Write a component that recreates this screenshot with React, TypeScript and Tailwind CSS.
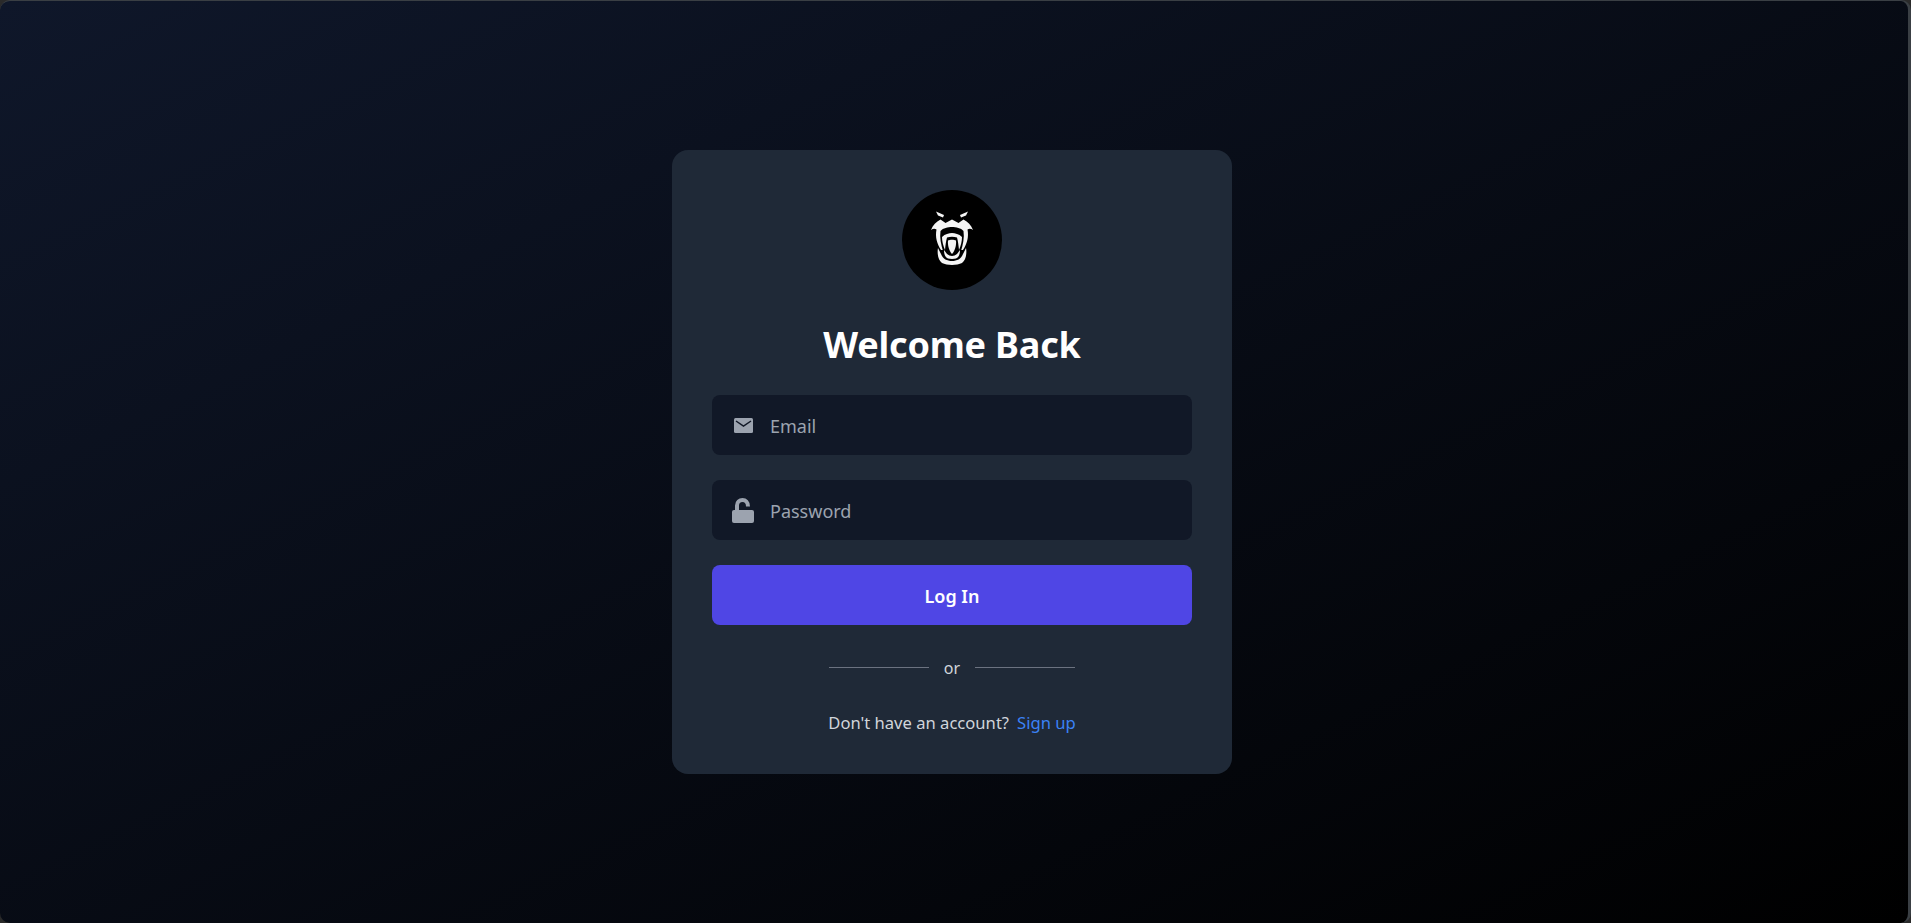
function GorillaLogo() {
  return (
    <svg viewBox="0 0 55 70" className="w-[55px] h-[70px] mb-[2px]">
      <path fill="#f5f5f5" d="M11 7.5 L19 11 L18 13.5 L13 11.5 Z" />
      <path fill="#f5f5f5" d="M43 7.5 L35 11 L36 13.5 L41 11.5 Z" />
      {/* head */}
      <path
        fill="#f5f5f5"
        d="M6 26 C8 21 11 18 15.5 15.5 L20.5 19 L27 15.5 L33.5 19 L38.5 15.5 C43 18 46 21 48 26 C46 24.5 44 24.5 42.5 25.5 C44 33 42 40 38 46 L16 46 C12 40 10 33 11.5 25.5 C10 24.5 8 24.5 6 26 Z"
      />
      <path fill="#000" d="M15.5 27 C18 24 23 23 27 23 C31 23 36 24 38.5 27 C39.5 34 38 40 36 47 L18 47 C16 40 14.5 34 15.5 27 Z" />
      {/* upper lip and teeth */}
      <path
        fill="#f5f5f5"
        d="M17 33 C20 30 24 29 27 29 C30 29 34 30 37 33 C37 37 36 41 34 46 C33.5 41 33 37 32 33.5 C29 32.5 25 32.5 22 33.5 C21 37 20.5 41 20 46 C18 41 17 37 17 33 Z"
      />
      {/* tongue */}
      <path fill="#f5f5f5" d="M23 36.5 C25 35.5 29 35.5 31 36.5 C31.5 41 30 47 27 50 C24 47 22.5 41 23 36.5 Z" />
      {/* inner jaw */}
      <path fill="#f5f5f5" d="M19 46 L22 50 C25 52.5 29 52.5 32 50 L35 46 C35 50 34 53 31 54.5 C29 55 25 55 23 54.5 C20 53 19 50 19 46 Z" />
      {/* outer jaw */}
      <path fill="#f5f5f5" d="M13 44 L16 50 C18 55 22 57 27 57 C32 57 36 55 38 50 L41 44 C42 49 41 56 37 59 C32 61.5 22 61.5 17 59 C13 56 12 49 13 44 Z" />
    </svg>
  );
}

function MailIcon() {
  return (
    <svg viewBox="0 0 19 15" className="w-[19px] h-[15px]">
      <rect width="19" height="15" rx="1.5" fill="#9ca3af" />
      <path d="M2 3 L9.5 8 L17 3" fill="none" stroke="#111827" strokeWidth="1.5" />
    </svg>
  );
}

function UnlockIcon() {
  return (
    <svg viewBox="0 0 22 25" className="w-[22px] h-[25px]">
      <path d="M5 13 V7.5 C5 4 7.5 2 10.5 2 C13.5 2 16 4 16 8.5" fill="none" stroke="#9ca3af" strokeWidth="4" />
      <rect y="12" width="22" height="13" rx="2" fill="#9ca3af" />
    </svg>
  );
}

export default function App() {
  return (
    <div className="h-[923px] bg-[#2a2a2a] font-['Noto_Sans',sans-serif]">
      <div className="h-full rounded-[10px] border-t border-r-[3px] border-[#3a3f44] bg-linear-to-br/srgb from-[#0f172a] to-black flex justify-center pt-[149px] pr-[4px]">
        <div className="w-[560px] h-[624px] bg-[#1f2937] rounded-2xl pt-10 px-10 flex flex-col items-center">
          <div className="w-[100px] h-[100px] shrink-0 rounded-full bg-black flex items-center justify-center">
            <GorillaLogo />
          </div>
          <h1 className="mt-[31px] text-[36px] leading-[48px] font-bold text-white tracking-[-0.2px]">Welcome Back</h1>
          <div className="mt-[26px] w-full flex flex-col gap-[25px]">
            <div className="h-[60px] bg-[#111827] rounded-lg flex items-center pl-[22px]">
              <MailIcon />
              <span className="ml-[17px] pt-[2px] text-[18px] text-[#9ca3af]">Email</span>
            </div>
            <div className="h-[60px] bg-[#111827] rounded-lg flex items-center pl-5">
              <UnlockIcon />
              <span className="ml-[16px] pt-[2px] text-[18px] text-[#9ca3af]">Password</span>
            </div>
            <button className="h-[60px] pt-[2px] bg-[#4f46e5] rounded-lg text-white text-[18px] font-semibold">Log In</button>
          </div>
          <div className="mt-[24px] h-[36px] flex items-center gap-[15px]">
            <div className="w-[100px] h-px bg-[#6b7280]" />
            <span className="pt-[2px] text-[16px] text-[#d1d5db]">or</span>
            <div className="w-[100px] h-px bg-[#6b7280]" />
          </div>
          <p className="mt-[26px] text-[16.6px] text-[#d1d5db]">
            Don't have an account?<a className="ml-2 text-[#3b82f6]">Sign up</a>
          </p>
        </div>
      </div>
    </div>
  );
}
